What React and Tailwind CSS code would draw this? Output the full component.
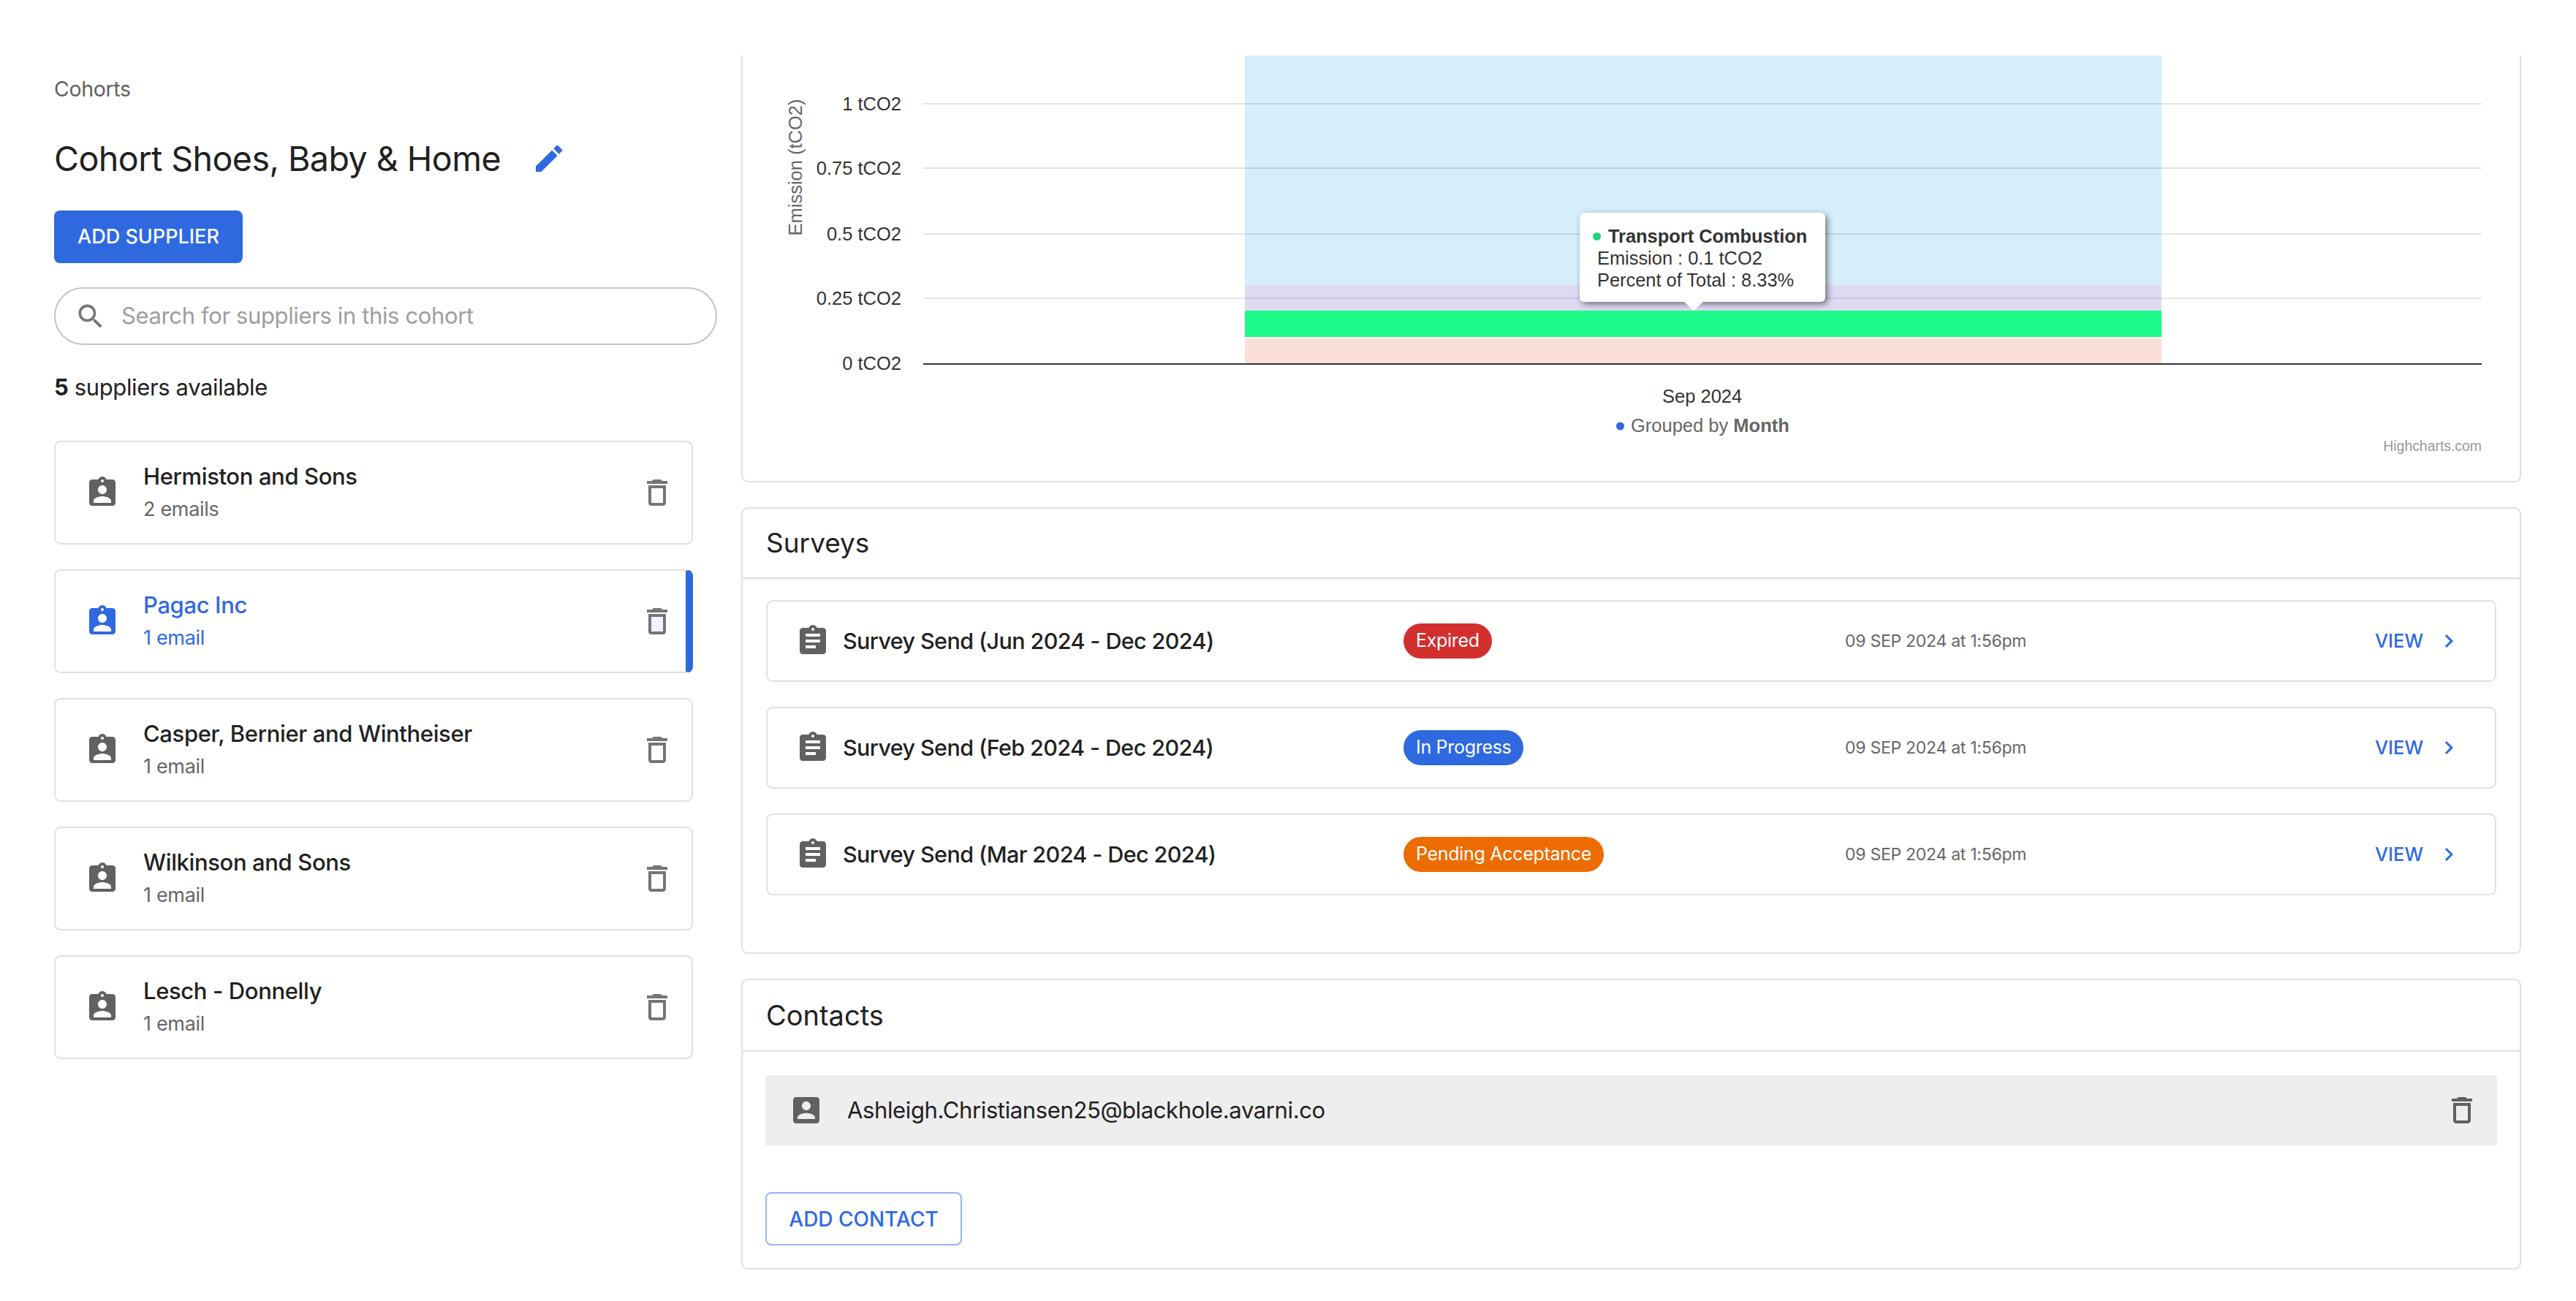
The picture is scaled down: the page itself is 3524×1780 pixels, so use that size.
import React from 'react';

// Material icon paths
const PATHS = {
  edit: 'M3 17.25V21h3.75L17.81 9.94l-3.75-3.75L3 17.25zM20.71 7.04c.39-.39.39-1.02 0-1.41l-2.34-2.34a.9959.9959 0 0 0-1.41 0l-1.83 1.83 3.75 3.75 1.83-1.83z',
  search: 'M15.5 14h-.79l-.28-.27C15.41 12.59 16 11.11 16 9.5 16 5.91 13.09 3 9.5 3S3 5.91 3 9.5 5.91 16 9.5 16c1.61 0 3.09-.59 4.23-1.57l.27.28v.79l5 4.99L20.49 19l-4.99-5zm-6 0C7.01 14 5 11.99 5 9.5S7.01 5 9.5 5 14 7.01 14 9.5 11.99 14 9.5 14z',
  badge: 'M19 3h-4.18C14.4 1.84 13.3 1 12 1c-1.3 0-2.4.84-2.82 2H5c-1.1 0-2 .9-2 2v14c0 1.1.9 2 2 2h14c1.1 0 2-.9 2-2V5c0-1.1-.9-2-2-2zm-7 0c.55 0 1 .45 1 1s-.45 1-1 1-1-.45-1-1 .45-1 1-1zm0 4c1.66 0 3 1.34 3 3s-1.34 3-3 3-3-1.34-3-3 1.34-3 3-3zm6 12H6v-1.4c0-2 4-3.1 6-3.1s6 1.1 6 3.1V19z',
  trash: 'M6 19c0 1.1.9 2 2 2h8c1.1 0 2-.9 2-2V7H6v12zM8 9h8v10H8V9zm7.5-5l-1-1h-5l-1 1H5v2h14V4z',
  clipboard: 'M19 3h-4.18C14.4 1.84 13.3 1 12 1c-1.3 0-2.4.84-2.82 2H5c-1.1 0-2 .9-2 2v14c0 1.1.9 2 2 2h14c1.1 0 2-.9 2-2V5c0-1.1-.9-2-2-2zm-7 0c.55 0 1 .45 1 1s-.45 1-1 1-1-.45-1-1 .45-1 1-1zm2 14H7v-2h7v2zm3-4H7v-2h10v2zm0-4H7V7h10v2z',
  contact: 'M3 5v14c0 1.1.89 2 2 2h14c1.1 0 2-.9 2-2V5c0-1.1-.9-2-2-2H5c-1.11 0-2 .9-2 2zm12 4c0 1.66-1.34 3-3 3s-3-1.34-3-3 1.34-3 3-3 3 1.34 3 3zm-9 8c0-2 4-3.1 6-3.1s6 1.1 6 3.1v1H6v-1z',
  chevron: 'M10 6 8.59 7.41 13.17 12l-4.58 4.59L10 18l6-6z',
};

const Icon = ({ name, className }) => (
  <svg viewBox="0 0 24 24" fill="currentColor" className={`shrink-0 ${className}`}>
    <path d={PATHS[name]} />
  </svg>
);

const suppliers = [
  { name: 'Hermiston and Sons', emails: '2 emails' },
  { name: 'Pagac Inc', emails: '1 email', selected: true },
  { name: 'Casper, Bernier and Wintheiser', emails: '1 email' },
  { name: 'Wilkinson and Sons', emails: '1 email' },
  { name: 'Lesch - Donnelly', emails: '1 email' },
];

const surveys = [
  { name: 'Survey Send (Jun 2024 - Dec 2024)', status: 'Expired', badge: 'bg-[#d32f2f]' },
  { name: 'Survey Send (Feb 2024 - Dec 2024)', status: 'In Progress', badge: 'bg-[#2f69e0]' },
  { name: 'Survey Send (Mar 2024 - Dec 2024)', status: 'Pending Acceptance', badge: 'bg-[#ed6c02]' },
];

const SupplierCard = ({ supplier }) => {
  const { name, emails, selected } = supplier;
  return (
    <div
      className={`flex h-[142px] items-center rounded-[9px] border-2 border-[#e0e0e0] pl-[40px] ${
        selected ? 'border-r-[10px] border-r-[#2f69e0] pr-[15px]' : 'pr-[23px]'
      }`}
    >
      <Icon name="badge" className={`h-12 w-12 ${selected ? 'text-[#2f69e0]' : 'text-[#616161]'}`} />
      <div className="ml-[32px] flex-1">
        <div className={`pt-[1px] text-[31px] leading-[44px] font-medium tracking-[-0.012em] ${selected ? 'text-[#2f69e0]' : 'text-[#212121]'}`}>
          {name}
        </div>
        <div className={`pt-[1px] text-[27px] leading-[44px] tracking-[-0.012em] ${selected ? 'text-[#2f69e0]' : 'text-[#666666]'}`}>
          {emails}
        </div>
      </div>
      <div className="relative h-12 w-12 shrink-0">
        {selected && <div className="absolute top-[16px] left-[12px] h-[26px] w-[24px] bg-[#eff3fb]" />}
        <Icon name="trash" className="relative h-12 w-12 text-[#757575]" />
      </div>
    </div>
  );
};

const SurveyRow = ({ survey }) => (
  <div className="flex h-[112px] items-center rounded-[9px] border-2 border-[#e0e0e0] pr-[45px] pl-[38px]">
    <Icon name="clipboard" className="h-12 w-12 text-[#616161]" />
    <div className="ml-[17px] w-[767px] shrink-0 text-[30.5px] font-medium tracking-[-0.02em] text-[#212121]">{survey.name}</div>
    <div className="w-[604px] shrink-0">
      <span className={`inline-flex h-12 items-center rounded-full px-[17px] text-[25px] tracking-[-0.012em] text-white ${survey.badge}`}>
        {survey.status}
      </span>
    </div>
    <div className="flex-1 text-[23px] tracking-[-0.012em] text-[#666666]">09 SEP 2024 at 1:56pm</div>
    <div className="text-[25.5px] font-medium text-[#2f69e0]">VIEW</div>
    <Icon name="chevron" className="ml-[17px] h-9 w-9 text-[#2f69e0]" />
  </div>
);

const GRID = [142, 230, 320, 408];
const LABELS = [
  { y: 142, text: '1 tCO2' },
  { y: 230, text: '0.75 tCO2' },
  { y: 320, text: '0.5 tCO2' },
  { y: 408, text: '0.25 tCO2' },
  { y: 497, text: '0 tCO2' },
];

// viewBox uses the page's own coordinates so the numbers read straight off the picture
const Chart = () => (
  <svg viewBox="1016 76 2431 582" className="block h-[582px] w-[2431px] font-['Liberation_Sans',sans-serif]">
    <rect x="1703" y="76" width="1254" height="314" fill="#d6edfc" />
    <rect x="1703" y="390" width="1254" height="35" fill="#dddaf2" />
    <rect x="1703" y="425" width="1254" height="36" fill="#1cfb89" />
    <rect x="1703" y="463" width="1254" height="34" fill="#fbe0d8" />
    {GRID.map((y) => (
      <line key={y} x1="1263" x2="3395" y1={y} y2={y} stroke="#000" strokeOpacity="0.1" strokeWidth="2" />
    ))}
    <line x1="1263" x2="3395" y1="498" y2="498" stroke="#333333" strokeWidth="2" />
    {LABELS.map((l) => (
      <text key={l.y} x="1233" y={l.y + 9} textAnchor="end" fontSize="25.5" fill="#333333">
        {l.text}
      </text>
    ))}
    <text transform="translate(1097 322.5) rotate(-90)" fontSize="25.5" fill="#666666">
      Emission (tCO2)
    </text>
    <text x="2274" y="551" fontSize="25.5" fill="#333333">
      Sep 2024
    </text>
    <circle cx="2216.5" cy="583" r="5.5" fill="#2f69e0" />
    <text x="2231" y="591" fontSize="25.5" fill="#666666">
      Grouped by <tspan fontWeight="700">Month</tspan>
    </text>
    <text x="3395" y="617" textAnchor="end" fontSize="19.4" fill="#999999">
      Highcharts.com
    </text>
  </svg>
);

const Tooltip = () => (
  <div className="absolute top-[215px] left-[1145px] h-[122px] w-[336px] rounded-[6px] bg-white pt-[17px] pl-[24px] font-['Liberation_Sans',sans-serif] text-[25.4px] leading-[30px] text-[#333333] shadow-[3px_3px_9px_rgba(0,0,0,0.5)]">
    <div className="flex items-center font-bold">
      <span className="mr-[10px] -ml-[6px] h-[11px] w-[11px] rounded-full bg-[#1fd67b]" />
      Transport Combustion
    </div>
    <div>Emission : 0.1 tCO2</div>
    <div>Percent of Total : 8.33%</div>
    <svg viewBox="0 0 26 12" className="absolute top-[122px] left-[143px] h-[12px] w-[26px]">
      <path d="M0 0H26L13 12Z" fill="#fff" />
    </svg>
  </div>
);

export default function App() {
  return (
    <div className="flex h-[1780px] w-[3524px] overflow-hidden bg-white font-['Inter',sans-serif] text-[#212121]">
      {/* Left column */}
      <div className="w-[1014px] shrink-0 pl-[74px]">
        <div className="mt-[102px] h-[40px] text-[28.5px] leading-[40px] tracking-[-0.012em] text-[#616161]">Cohorts</div>
        <div className="mt-[45px] flex h-[60px] items-center">
          <h1 className="text-[46.6px] leading-[60px] font-normal tracking-[-0.012em]">Cohort Shoes, Baby &amp; Home</h1>
          <Icon name="edit" className="ml-[42px] h-12 w-12 text-[#2f69e0]" />
        </div>
        <button className="mt-[41px] flex h-[72px] w-[258px] items-center justify-center rounded-[8px] bg-[#2f69e0] text-[27px] font-medium text-white">
          ADD SUPPLIER
        </button>
        <div className="mt-[33px] flex h-[79px] w-[907px] items-center rounded-full border-2 border-[#c4c4c4] pl-[26px]">
          <Icon name="search" className="h-[44px] w-[44px] text-[#757575]" />
          <span className="ml-[20px] text-[31px] tracking-[-0.012em] text-[#9e9e9e]">Search for suppliers in this cohort</span>
        </div>
        <div className="mt-[38px] h-[40px] text-[31px] leading-[40px] tracking-[-0.012em]">
          <span className="font-bold">5</span> suppliers available
        </div>
        <div className="mt-[53px] flex w-[874px] flex-col gap-[34px]">
          {suppliers.map((s) => (
            <SupplierCard key={s.name} supplier={s} />
          ))}
        </div>
      </div>

      {/* Right column */}
      <div className="w-[2435px] shrink-0 pt-[76px]">
        <div className="relative h-[584px] rounded-b-[9px] border-x-2 border-b-2 border-[#e0e0e0]">
          <Chart />
          <Tooltip />
        </div>

        <section className="mt-[34px] h-[611px] rounded-[9px] border-2 border-[#e0e0e0]">
          <div className="flex h-[96px] items-center border-b-2 border-[#e0e0e0] pl-[32px] text-[37px]">Surveys</div>
          <div className="flex flex-col gap-[34px] px-[32px] pt-[29px]">
            {surveys.map((s) => (
              <SurveyRow key={s.name} survey={s} />
            ))}
          </div>
        </section>

        <section className="mt-[34px] h-[398px] rounded-[9px] border-2 border-[#e0e0e0]">
          <div className="flex h-[98px] items-center border-b-2 border-[#e0e0e0] pl-[32px] text-[38px]">Contacts</div>
          <div className="px-[31px] pt-[32px]">
            <div className="flex h-[96px] items-center bg-[#eeeeee] pr-[24px] pl-[32px]">
              <Icon name="contact" className="h-12 w-12 text-[#616161]" />
              <div className="ml-[32px] flex-1 text-[31px] tracking-[-0.012em]">Ashleigh.Christiansen25@blackhole.avarni.co</div>
              <Icon name="trash" className="h-12 w-12 text-[#616161]" />
            </div>
            <button className="mt-[64px] flex h-[73px] w-[269px] items-center justify-center rounded-[8px] border-2 border-[#97b4ef] text-[28px] font-medium text-[#2f69e0]">
              ADD CONTACT
            </button>
          </div>
        </section>
      </div>
    </div>
  );
}
